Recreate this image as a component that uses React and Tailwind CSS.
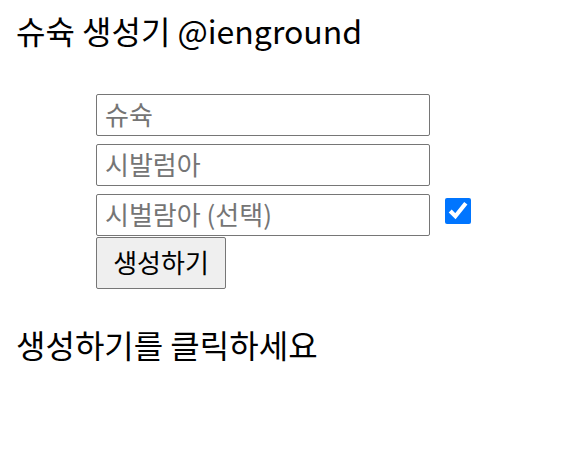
export default function App() {
    const fieldStyles = "box-border w-[334px] h-[42px] border border-[#767676] rounded-[2px] px-2 pb-1 text-[26px] text-black placeholder:text-[#757575] bg-white outline-none";

    return (
        <div className="min-h-screen bg-white px-4 pt-[8px] font-['Noto_Sans_CJK_KR','Noto_Sans',sans-serif] text-black">
            <h1 className="text-[32px] leading-[44px] font-normal">슈슉 생성기 @ienground</h1>

            <form className="ml-20 mt-[42px] flex flex-col" onSubmit={(e) => e.preventDefault()}>
                <input type="text" placeholder="슈슉" className={fieldStyles} />
                <input type="text" placeholder="시발럼아" className={`mt-2 ${fieldStyles}`} />
                <div className="mt-2 flex items-start">
                    <input type="text" placeholder="시벌람아 (선택)" className={fieldStyles} />
                    <input type="checkbox" defaultChecked className="ml-[15px] mt-1 m-0 w-[26px] h-[26px]" />
                </div>
                <button
                    type="submit"
                    className="mt-px w-[130px] h-[52px] border border-[#767676] rounded-[2px] bg-[#efefef] pb-1 text-[26px] text-black"
                >
                    생성하기
                </button>
            </form>

            <p className="mt-[33px] text-[32px] leading-[44px]">생성하기를 클릭하세요</p>
        </div>
    );
}
